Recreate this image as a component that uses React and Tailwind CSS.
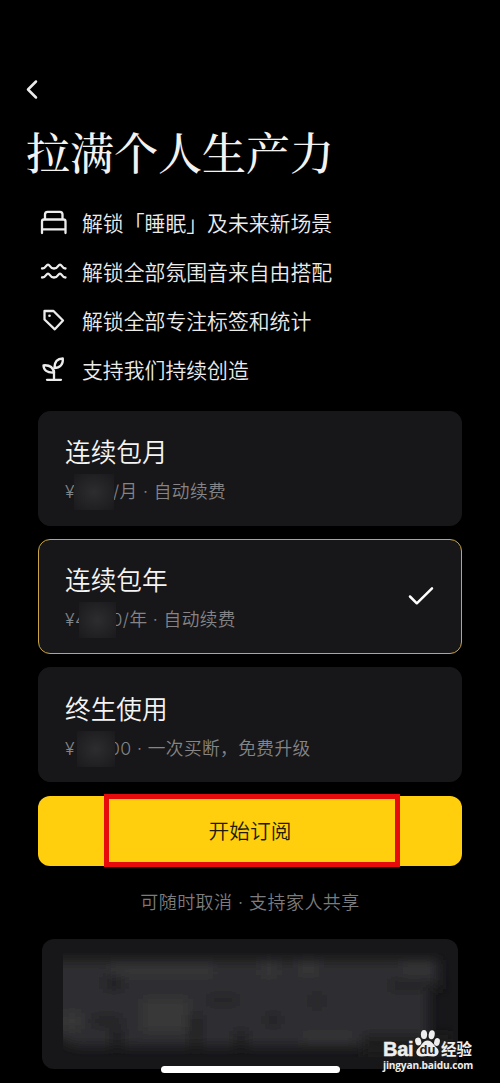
import React, { useState } from 'react';

const strokeProps = {
  fill: 'none',
  stroke: 'currentColor',
  strokeWidth: 2.3,
  strokeLinecap: 'round',
  strokeLinejoin: 'round'
};

const BedIcon = () => (
  <svg width="28" height="28" viewBox="0 0 28 28" {...strokeProps}>
    <path d="M5 11V6.5Q5 3.8 7.5 3.8H20Q22.5 3.8 22.5 6.5V11" />
    <path d="M2 25V13.5Q2 11.5 4 11.5H23.5Q25.5 11.5 25.5 13.5V25M2 21.3H25.5" />
  </svg>
);

const WavesIcon = () => (
  <svg width="28" height="28" viewBox="0 0 28 28" {...strokeProps}>
    <path d="M2 11.5Q4.5 11.5 6.3 8.8Q8 6.3 9.7 8.8Q11.5 11.5 14 11.5T18.3 8.8Q20 6.3 21.7 8.8Q23.5 11.5 25.5 11.5" />
    <path d="M2 20.5Q4.5 20.5 6.3 17.8Q8 15.3 9.7 17.8Q11.5 20.5 14 20.5T18.3 17.8Q20 15.3 21.7 17.8Q23.5 20.5 25.5 20.5" />
  </svg>
);

const TagIcon = () => (
  <svg width="28" height="28" viewBox="0 0 28 28" {...strokeProps}>
    <path d="M4.5 5H13.5L23 14.5L14.8 23.3L4.5 13.5Z" />
    <circle cx="9.5" cy="9.8" r="1.3" fill="currentColor" stroke="none" />
  </svg>
);

const SproutIcon = () => (
  <svg width="28" height="28" viewBox="0 0 28 28" {...strokeProps}>
    <path d="M14 24.5V16M7 24.8H21" />
    <path d="M14 17.5C7 18 3.5 15 3.5 10.3C9.5 9.8 13 12 14 17.5Z" />
    <path d="M14.3 13C14.5 6.5 18 3.5 22.8 3.5C23.3 9.5 20 13 14.3 13Z" />
  </svg>
);

const features = [
  { icon: BedIcon, text: '解锁「睡眠」及未来新场景' },
  { icon: WavesIcon, text: '解锁全部氛围音来自由搭配' },
  { icon: TagIcon, text: '解锁全部专注标签和统计' },
  { icon: SproutIcon, text: '支持我们持续创造' }
];

const plans = [
  { id: 'month', name: '连续包月', before: '¥', after: '/', unit: '月 · 自动续费', gap: 'w-[40px] -ml-px -mr-px' },
  { id: 'year', name: '连续包年', before: '¥4', after: '0/', unit: '年 · 自动续费', gap: 'w-[37px] -ml-[7px] -mr-[5px]' },
  { id: 'life', name: '终生使用', before: '¥', after: '00', unit: ' · 一次买断，免费升级', gap: 'w-[38px] ml-[2px] -mr-[6px]' }
];

const PlanCard = ({ plan, selected, onSelect }) => (
  <button
    onClick={onSelect}
    className={
      selected
        ? 'flex h-[115px] w-full items-center justify-between rounded-xl border border-[#c9a548] bg-[#171719] pl-[26px] pr-[27px] text-left'
        : 'flex h-[115px] w-full items-center justify-between rounded-xl border border-[#171719] bg-[#171719] pl-[26px] pr-[27px] text-left'
    }
  >
    <div className="pt-[7px]">
      <p className="text-[25.7px] font-[350] leading-9 text-[#f4f4f4]">{plan.name}</p>
      <p className="mt-[5px] flex h-9 items-center whitespace-pre font-['Inter','Noto_Sans_CJK_SC',sans-serif] text-[17.7px] font-[350] tracking-[0.4px] text-[#858587]">
        {plan.before}
        <span className={`${plan.gap} relative h-9 bg-radial from-[#2d2d2f] to-[#1a1a1c]`} />
        {plan.after}
        {plan.unit}
      </p>
    </div>
    {selected && (
      <svg width="26" height="20" viewBox="0 0 26 20" {...strokeProps} className="text-white">
        <path strokeWidth="2.5" d="M2 10.5L8.8 17.3L24 2.3" />
      </svg>
    )}
  </button>
);

// Obscured terms text
const TermsBlock = () => (
  <svg width="390" height="104" viewBox="0 0 390 104" className="block">
    <defs>
      <filter id="soft" x="-20%" y="-50%" width="140%" height="200%">
        <feGaussianBlur stdDeviation="6" />
      </filter>
    </defs>
    <g filter="url(#soft)">
      <path fill="#2f2f31" d="M-15 7H375V30H365V84H300V93H12L-15 80Z" />
      <path fill="#373739" d="M48 12H150V22H48ZM198 8H214V22H198ZM235 8H256V20H235ZM340 10H370V20H340ZM80 46H125V78H80ZM0 60H18V76H0ZM240 82H290V90H240Z" />
      <path fill="#1b1b1d" d="M42 24H60V36H42ZM30 64H58V72H30ZM48 76H60V94H48ZM128 62H138V94H128ZM145 44H175V50H145ZM204 62H216V72H204ZM250 42H258V54H250ZM172 78H184V94H172ZM326 29H380V36H326ZM300 82H390V104H300Z" />
    </g>
  </svg>
);

const Watermark = () => (
  <div className="absolute left-[383px] top-[1027px] text-[#eeeeee]">
    <div className="flex h-[31px] items-end font-bold">
      <span className="w-[31px] font-['Liberation_Sans',sans-serif] text-[20px] leading-[18px] tracking-[-0.3px] [-webkit-text-stroke:0.5px]">Bai</span>
      <svg width="27" height="30" viewBox="0 0 27 30" fill="currentColor">
        <ellipse cx="4.2" cy="13.5" rx="3" ry="4" transform="rotate(-15 4.2 13.5)" />
        <ellipse cx="10" cy="6.5" rx="3.1" ry="4.5" />
        <ellipse cx="17.7" cy="6.8" rx="3" ry="4.5" transform="rotate(10 17.7 6.8)" />
        <ellipse cx="23" cy="14" rx="2.8" ry="4" transform="rotate(15 23 14)" />
        <path d="M13.5 12.5C18 12.5 19 16.5 23 20C27 24.5 23 29 19 28.5C15 27.8 12 27.8 8 28.5C3 29 0 24.5 4.5 20C8.5 16.5 9 12.5 13.5 12.5Z" />
        <text x="13.5" y="26" textAnchor="middle" fill="#222222" fontSize="13" fontWeight="700" fontFamily="Liberation Sans, sans-serif">du</text>
      </svg>
      <span className="text-[15.5px] leading-[19px]">经验</span>
    </div>
    <p className="font-['Open_Sans',sans-serif] text-[10.2px] font-bold leading-[14px] tracking-[-0.2px]">jingyan.baidu.com</p>
  </div>
);

const App = () => {
  const [selected, setSelected] = useState('year');

  return (
    <div
      lang="zh-CN"
      className="relative h-[1083px] w-[500px] overflow-hidden bg-black pt-[79px] font-['Noto_Sans_CJK_SC',sans-serif] text-[#ececec]"
    >
      <svg width="14" height="22" viewBox="0 0 14 22" {...strokeProps} className="ml-[25px] block">
        <path strokeWidth="2.5" d="M11 2.5L3 10.5L11 18.5" />
      </svg>

      <h1 className="ml-[26px] mt-[18px] h-[64px] whitespace-nowrap font-['Noto_Serif_CJK_SC','Songti_SC','Noto_Sans_CJK_SC',serif] text-[44px] font-medium leading-[64px] text-[#f2f2f2]">
        拉满个人生产力
      </h1>

      {/* Features */}
      <ul className="ml-10 mt-[15px]">
        {features.map(({ icon: Icon, text }) => (
          <li key={text} className="flex h-[48.75px] items-center gap-[14px]">
            <Icon />
            <span className="whitespace-nowrap text-[20.85px] font-[350] leading-8">{text}</span>
          </li>
        ))}
      </ul>

      {/* Plans */}
      <div className="mx-[38px] mt-[17.5px] flex flex-col gap-[13.4px]">
        {plans.map((plan) => (
          <PlanCard
            key={plan.id}
            plan={plan}
            selected={plan.id === selected}
            onSelect={() => setSelected(plan.id)}
          />
        ))}
        <div className="relative">
          <button className="block h-[70px] w-full rounded-xl bg-[#ffcf0d] text-[20.7px] font-[350] text-[#211b05]">
            开始订阅
          </button>
          <div className="pointer-events-none absolute -top-[2px] left-[66px] h-[73px] w-[296px] border-[5px] border-[#e80b0b]" />
        </div>
      </div>

      <p className="mt-[23px] text-center font-['Inter','Noto_Sans_CJK_SC',sans-serif] text-[18px] font-[350] leading-7 tracking-[0.45px] text-[#7c7c7e]">
        可随时取消 · 支持家人共享
      </p>

      <div className="mx-[42px] mt-[22.5px] h-[130px] overflow-hidden rounded-xl bg-[#171719] pl-[21px] pt-[14px]">
        <TermsBlock />
      </div>

      {/* Home indicator */}
      <div className="absolute left-[161px] top-[1066px] h-[7px] w-[179px] rounded-full bg-white" />
      <Watermark />
    </div>
  );
};

export default App;
